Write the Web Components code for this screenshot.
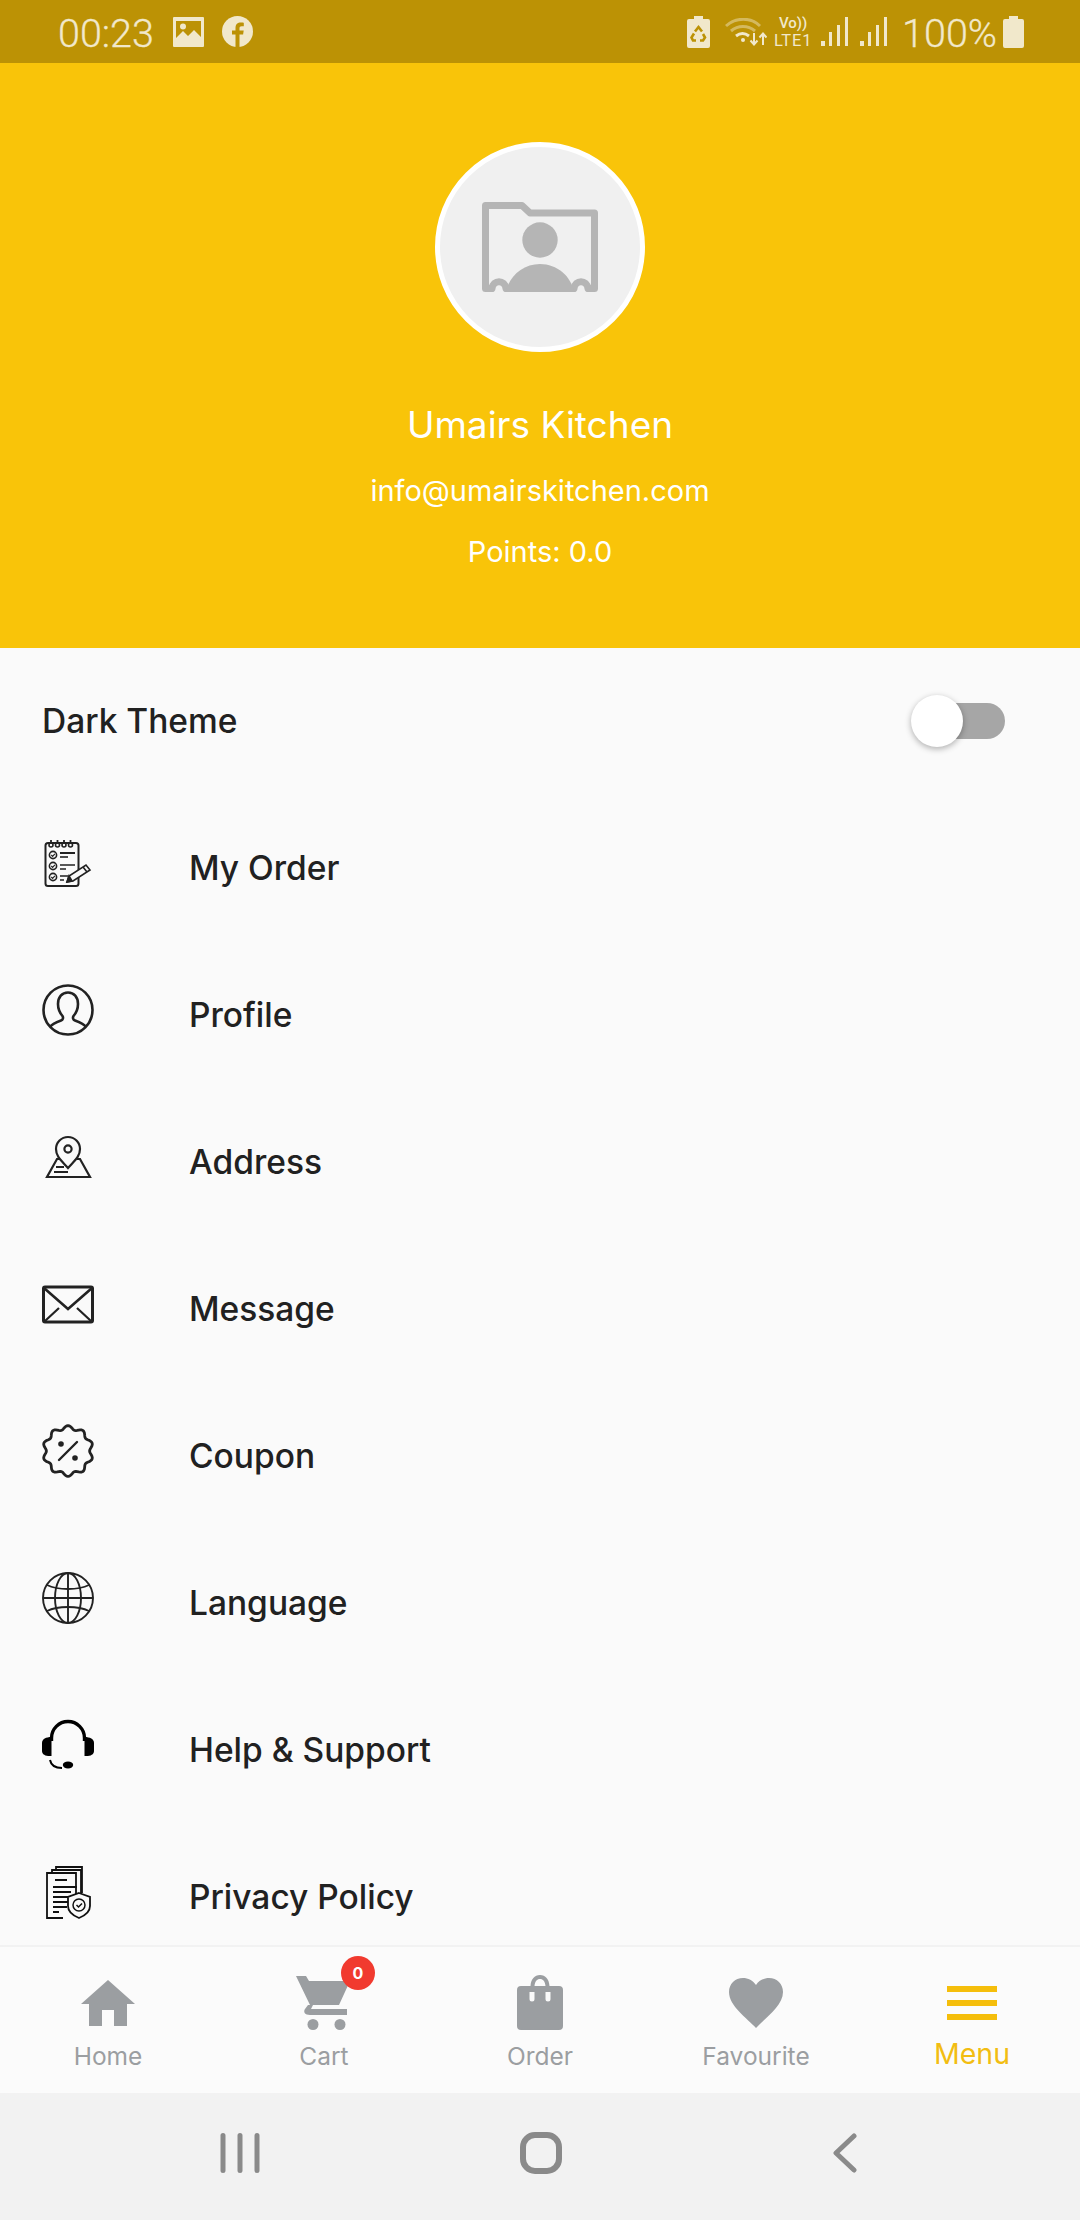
<!DOCTYPE html>
<html>
<head>
<meta charset="utf-8">
<title>Menu</title>
<style>
    html, body { margin: 0; padding: 0; background: #fafafa; }
</style>
</head>
<body>
<app-screen>
    <status-bar slot="status"></status-bar>
    <profile-header slot="header" name="Umairs Kitchen" email="info@umairskitchen.com" points="Points: 0.0"></profile-header>
    <theme-row slot="list">Dark Theme</theme-row>
    <menu-row slot="list" icon="order">My Order</menu-row>
    <menu-row slot="list" icon="profile">Profile</menu-row>
    <menu-row slot="list" icon="address">Address</menu-row>
    <menu-row slot="list" icon="message">Message</menu-row>
    <menu-row slot="list" icon="coupon">Coupon</menu-row>
    <menu-row slot="list" icon="language">Language</menu-row>
    <menu-row slot="list" icon="help">Help &amp; Support</menu-row>
    <menu-row slot="list" icon="privacy">Privacy Policy</menu-row>
    <bottom-nav slot="nav"></bottom-nav>
    <system-nav slot="system"></system-nav>
</app-screen>

<script>
const FONT = `"Inter", "Roboto", "Liberation Sans", sans-serif`;

// scalloped badge outline for the coupon icon
function scallop(cx, cy, r, amp, lobes) {
    let d = '';
    for (let i = 0; i < 120; i++) {
        const a = i / 120 * Math.PI * 2;
        const rr = r + amp * Math.cos(lobes * a);
        const x = cx + rr * Math.sin(a);
        const y = cy - rr * Math.cos(a);
        d += (i ? 'L' : 'M') + x.toFixed(2) + ' ' + y.toFixed(2);
    }
    return d + 'z';
}

const menuIcons = {
    order: `
        <g fill="none" stroke="#222" stroke-width="1.6">
            <rect x="3.5" y="6" width="33" height="43" rx="2.5" stroke-width="2"/>
            <circle cx="9" cy="8" r="2"/><circle cx="15.5" cy="8" r="2"/><circle cx="22" cy="8" r="2"/><circle cx="28.5" cy="8" r="2"/>
            <path d="M9 3v3M15.5 3v3M22 3v3M28.5 3v3" stroke-width="1.8"/>
            <circle cx="11" cy="18" r="3.6"/><circle cx="11" cy="29" r="3.6"/><circle cx="11" cy="40" r="3.6"/>
            <path d="M9.3 18l1.3 1.3 2.3-2.4M9.3 29l1.3 1.3 2.3-2.4M9.3 40l1.3 1.3 2.3-2.4" stroke-width="1.2"/>
            <path d="M18 16h15" stroke-width="2"/><path d="M18 20h8" stroke-width="1.6"/>
            <path d="M18 28h15M18 32h6M18 39h8M18 43h4"/>
            <path d="M25 45l2-6 17-11 4 5-17 11z" fill="#fafafa"/>
            <path d="M25 45l5-1-3-5zM41 30l4 5" fill="#222"/>
        </g>`,
    profile: `
        <g fill="none" stroke="#222" stroke-width="2.6">
            <circle cx="26" cy="26" r="24.5"/>
            <path d="M8 43c2-3 7-5 11-6.500 2-.8 2.500-3 1.500-4.500-3-3.500-4.500-7-4.500-12 0-7 4-11.500 10-11.500s10 4.500 10 11.500c0 5-1.500 8.500-4.500 12-1 1.500-.5 3.700 1.500 4.500 4 1.500 9 3.500 11 6.500"/>
        </g>`,
    address: `
        <g fill="none" stroke="#222" stroke-width="2.2">
            <path d="M26 37c-6-7-12-11-12-19a12 12 0 0 1 24 0c0 8-6 12-12 19z" fill="#fafafa"/>
            <circle cx="26" cy="18" r="3.600"/>
            <path d="M18 28h-3L5 46h43L38 28h-3"/>
            <path d="M14 36h8M12 41h14" stroke-width="1.800"/>
        </g>`,
    message: `
        <g fill="none" stroke="#222" stroke-width="3">
            <rect x="1.500" y="9" width="49" height="35" rx="1.500"/>
            <path d="M2 10l24 21 24-21" stroke-width="2.600"/>
            <path d="M3 43l14-13M49 43L35 30" stroke-width="2.200"/>
        </g>`,
    coupon: `
        <path d="${scallop(26, 26, 23.5, 1.9, 10)}" fill="none" stroke="#222" stroke-width="2.800" stroke-linejoin="round"/>
        <path d="M35 17L17 35" fill="none" stroke="#222" stroke-width="2.400" stroke-linecap="round"/>
        <circle cx="19" cy="19" r="2.800" fill="#222"/>
        <circle cx="33" cy="33" r="2.800" fill="#222"/>`,
    language: `
        <g fill="none" stroke="#222" stroke-width="1.900">
            <circle cx="26" cy="26" r="25"/>
            <ellipse cx="26" cy="26" rx="13" ry="25"/>
            <path d="M26 1v50M1 26h50"/>
            <path d="M5 13c6 3 14 4 21 4s15-1 21-4M5 39c6-3 14-4 21-4s15 1 21 4"/>
        </g>`,
    help: `
        <path d="M9.500 22v-3a16.500 16.500 0 0 1 33 0v3" fill="none" stroke="#000" stroke-width="3.400"/>
        <path d="M9.500 18v19c-5 .5-9.500-1-9.500-5V24c0-4 4-6 9.500-6z" fill="#000"/>
        <path d="M42.500 18v19c5 .5 9.500-1 9.500-5V24c0-4-4-6-9.500-6z" fill="#000"/>
        <path d="M8 41c1 5 5 8 12 8" fill="none" stroke="#000" stroke-width="2"/>
        <ellipse cx="26" cy="46" rx="5.200" ry="3.400" fill="#000"/>`,
    privacy: `
        <g fill="none" stroke="#111" stroke-width="1.800">
            <path d="M14 5V1h26v26"/>
            <path d="M10 8V4h29v27"/>
            <path d="M21 52H5V7h29v28"/>
            <path d="M13 14h12" stroke-width="2"/>
            <path d="M11 21h24M11 26h18M11 31h16M11 36h16M11 41h14M11 46h6" stroke-width="2"/>
        </g>
        <path d="M37 33l11 4v9c0 6-6 10-11 12-5-2-11-6-11-12v-9z" fill="#fafafa" stroke="#111" stroke-width="1.800" transform="translate(0 -6)"/>
        <circle cx="37" cy="39" r="6" fill="none" stroke="#111" stroke-width="1.500"/>
        <path d="M34.500 39l2 2 3.500-3.500" fill="none" stroke="#111" stroke-width="1.500"/>`
};

class AppScreen extends HTMLElement {
    constructor() {
        super();
        this.attachShadow({ mode: 'open' });
        this.shadowRoot.innerHTML = `
            <style>
                :host { display: flex; flex-direction: column; width: 1080px; height: 2220px; overflow: hidden; background: #fafafa; font-family: ${FONT}; }
                .list { flex: 1; min-height: 0; overflow: hidden; display: flex; flex-direction: column; }
            </style>
            <slot name="status"></slot>
            <slot name="header"></slot>
            <div class="list"><slot name="list"></slot></div>
            <slot name="nav"></slot>
            <slot name="system"></slot>
        `;
    }
}

class StatusBar extends HTMLElement {
    constructor() {
        super();
        this.attachShadow({ mode: 'open' });
        this.shadowRoot.innerHTML = `
            <style>
                :host { display: flex; align-items: center; height: 63px; flex: none; background: #bc9205; color: #f1e8cb; font-family: Roboto, sans-serif; padding-left: 58px; padding-right: 56px; }
                .t { font-size: 39.5px; font-weight: 300; line-height: 58px; padding-top: 5px; -webkit-text-stroke: .3px #f1e8cb; }
                svg { display: block; flex: none; }
                .left, .right { display: flex; align-items: center; }
                .right { margin-left: auto; }
                .lte { display: flex; flex-direction: column; align-items: center; width: 40px; margin-left: 6px; margin-right: 8px; padding-top: 1px; }
                .lte span { display: block; line-height: 18.500px; }
                .lte span:first-child { font-size: 15px; font-weight: 500; }
                .lte span:last-child { font-size: 16.500px; letter-spacing: .8px; }
            </style>
            <div class="left">
                <span class="t">00:23</span>
                <svg style="margin-left:19px" width="31" height="30" viewBox="0 0 31 30"><path fill-rule="evenodd" fill="#f1e8cb" d="M1 0h29a1 1 0 0 1 1 1v28a1 1 0 0 1-1 1H1a1 1 0 0 1-1-1V1a1 1 0 0 1 1-1zM3 4v17l7-7 5 5 6-6 7 7V4z"/><circle cx="10" cy="9.500" r="3" fill="#f1e8cb"/></svg>
                <svg style="margin-left:18px" width="31" height="31" viewBox="0 0 31 31"><circle cx="15.500" cy="15.500" r="15.500" fill="#f1e8cb"/><path fill="#bc9205" d="M13.500 31V18.500H10v-4h3.500V12c0-3.800 2.200-5.500 5.300-5.500 1.500 0 2.700.1 3 .2v3.600h-2.100c-1.700 0-2.200.8-2.200 2v2.200h4.200l-.6 4h-3.600V31z"/></svg>
            </div>
            <div class="right">
                <svg width="23" height="32" viewBox="0 0 23 32"><path fill-rule="evenodd" fill="#f1e8cb" d="M7 0h9v3h5a2 2 0 0 1 2 2v25a2 2 0 0 1-2 2H2a2 2 0 0 1-2-2V5a2 2 0 0 1 2-2h5z"/><path fill="none" stroke="#bc9205" stroke-width="2.600" d="M8 15.500l3.500-4.500 3.500 4.500M16 18l2 3.500-2 3h-3M9 24.500H6l-1.500-3 2.500-4"/></svg>
                <svg style="margin-left:15px" width="42" height="28" viewBox="0 0 42 28"><g fill="none" stroke="#f1e8cb"><path stroke-opacity=".45" stroke-width="3" d="M1 8c10-9 25-9 34 0M6 13c7-6 17-6 24 0"/><path stroke-width="3" d="M11 18c4-3 9-3 13 0"/></g><circle cx="18" cy="22" r="2" fill="#f1e8cb"/><path fill="none" stroke="#f1e8cb" stroke-width="2" d="M29 15v11M25.500 22.500l3.500 4 3.500-4M38 27V16M34.500 19.500l3.500-4 3.500 4"/></svg>
                <div class="lte"><span>Vo))</span><span>LTE1</span></div>
                <svg width="27" height="30" viewBox="0 0 27 30"><path fill="#f1e8cb" d="M0 24h4v5H0zM8 15h3v14H8zM16 8h3v21h-3zM24 0h3v29h-3z"/></svg>
                <svg style="margin-left:12px" width="27" height="30" viewBox="0 0 27 30"><path fill="#f1e8cb" d="M0 24h4v5H0zM8 15h3v14H8zM16 8h3v21h-3zM24 0h3v29h-3z"/></svg>
                <span class="t" style="margin-left:15px">100%</span>
                <svg style="margin-left:6px" width="21" height="32" viewBox="0 0 21 32"><path fill="#f1e8cb" d="M6 0h9v3h4a2 2 0 0 1 2 2v25a2 2 0 0 1-2 2H2a2 2 0 0 1-2-2V5a2 2 0 0 1 2-2h4z"/></svg>
            </div>
        `;
    }
}

class ProfileHeader extends HTMLElement {
    constructor() {
        super();
        this.attachShadow({ mode: 'open' });
        this.shadowRoot.innerHTML = `
            <style>
                :host { display: flex; flex-direction: column; align-items: center; flex: none; height: 585px; box-sizing: border-box; padding-top: 79px; background: #f9c409; color: #fff; }
                .avatar { width: 210px; height: 210px; box-sizing: border-box; border: 5px solid #fff; border-radius: 50%; background: #f0f0f0; display: flex; align-items: center; justify-content: center; }
                .name { font-size: 37px; line-height: 44px; margin-top: 51px; }
                .email { font-size: 29px; line-height: 36px; margin-top: 26px; }
                .points { font-size: 29px; line-height: 36px; margin-top: 25px; }
            </style>
            <div class="avatar">
                <svg width="116" height="90" viewBox="0 0 116 90">
                    <path fill="none" stroke="#b5b5b5" stroke-width="7" stroke-linejoin="round" d="M3.500 86.500V3.500H40L48 11H112.500V86.500H106c-1-9-13-9-14 0H24c-1-9-13-9-14 0z"/>
                    <circle cx="58" cy="38" r="17.700" fill="#b5b5b5"/>
                    <path fill="#b5b5b5" d="M24 90c3-16 17-28 34-28s31 12 34 28z"/>
                </svg>
            </div>
            <div class="name">${this.getAttribute('name')}</div>
            <div class="email">${this.getAttribute('email')}</div>
            <div class="points">${this.getAttribute('points')}</div>
        `;
    }
}

class ThemeRow extends HTMLElement {
    constructor() {
        super();
        this.attachShadow({ mode: 'open' });
        this.shadowRoot.innerHTML = `
            <style>
                :host { display: flex; align-items: center; justify-content: space-between; flex: none; height: 147px; box-sizing: border-box; padding: 0 75px 1px 42px; color: #212121; font-size: 33.5px; font-weight: 500; }
                .switch { position: relative; width: 90px; height: 36px; background: #a6a6a6; border-radius: 18px; }
                .knob { position: absolute; left: -4px; top: -8px; width: 52px; height: 52px; border-radius: 50%; background: #fff; box-shadow: 0 2px 6px rgba(0,0,0,.3); }
            </style>
            <span><slot></slot></span>
            <div class="switch"><div class="knob"></div></div>
        `;
    }
}

class MenuRow extends HTMLElement {
    constructor() {
        super();
        this.attachShadow({ mode: 'open' });
        const icon = menuIcons[this.getAttribute('icon')] || '';
        this.shadowRoot.innerHTML = `
            <style>
                :host { display: flex; align-items: center; flex: none; height: 147px; box-sizing: border-box; padding: 0 42px 1px; color: #212121; font-size: 33.5px; font-weight: 500; }
                svg { display: block; flex: none; width: 52px; height: 52px; margin-right: 95px; margin-top: -10px; overflow: visible; }
            </style>
            <svg viewBox="0 0 52 52">${icon}</svg>
            <span><slot></slot></span>
        `;
    }
}

const navItems = [
    { label: 'Home', svg: `<svg width="54" height="46" viewBox="0 0 54 46"><path fill="#9b9ea1" d="M27 0l27 24h-8v22H33V30H21v16H8V24H0z"/></svg>` },
    { label: 'Cart', svg: `<svg style="margin-left:-2px" width="54" height="54" viewBox="0 0 54 54"><path fill="#9b9ea1" d="M0 0h10l3 5h41L43 29H14zM12 29h5l-2 4h36v6H14c-5 0-7-3-5-6z"/><circle cx="17" cy="48.500" r="5.500" fill="#9b9ea1"/><circle cx="44" cy="48.500" r="5.500" fill="#9b9ea1"/></svg>`, badge: '0' },
    { label: 'Order', svg: `<svg width="46" height="55" viewBox="0 0 46 55"><path fill="#9b9ea1" d="M4 11h9.500c.5-7 4-11 9.500-11s9 4 9.500 11H42a4 4 0 0 1 4 4v36a4 4 0 0 1-4 4H4a4 4 0 0 1-4-4V15a4 4 0 0 1 4-4zm13.500 0h11c-.4-4.500-2.500-7-5.500-7s-5.100 2.500-5.500 7z"/><path fill="#fafafa" d="M12.500 17h5v7a2.500 2.500 0 0 1-5 0zM28.500 17h5v7a2.500 2.500 0 0 1-5 0z"/></svg>` },
    { label: 'Favourite', svg: `<svg width="54" height="50" viewBox="0 0 54 50"><path fill="#9b9ea1" d="M27 50C18 40 0 28 0 14 0 6 6 0 14 0c5 0 10 2.500 13 7 3-4.500 8-7 13-7 8 0 14 6 14 14 0 14-18 26-27 36z"/></svg>` },
    { label: 'Menu', active: true, svg: `<svg width="50" height="34" viewBox="0 0 50 34"><path fill="#f5be0b" d="M0 0h50v6H0zM0 14h50v6H0zM0 28h50v6H0z"/></svg>` }
];

class BottomNav extends HTMLElement {
    constructor() {
        super();
        this.attachShadow({ mode: 'open' });
        const items = navItems.map(item => `
            <div class="item ${item.active ? 'active' : ''}">
                <div class="icon">${item.svg}${item.badge ? `<span class="badge">${item.badge}</span>` : ''}</div>
                <div class="label">${item.label}</div>
            </div>
        `).join('');
        this.shadowRoot.innerHTML = `
            <style>
                :host { display: grid; grid-template-columns: repeat(5, 216px); flex: none; height: 148px; box-sizing: border-box; border-top: 2px solid #f2f2f2; background: #fbfbfb; }
                .item { display: flex; flex-direction: column; align-items: center; color: #9b9ea1; }
                .icon { position: relative; height: 55px; margin-top: 28px; display: flex; align-items: center; justify-content: center; }
                .label { font-size: 24.5px; line-height: 30px; margin-top: 11px; }
                .active { color: #f2bd12; }
                .active .label { font-size: 28.5px; margin-top: 9px; }
                .badge { position: absolute; left: 43px; top: -19px; width: 34px; height: 34px; border-radius: 50%; background: #f13a2f; color: #fff; font-size: 16px; font-weight: 700; line-height: 34px; text-align: center; }
            </style>
            ${items}
        `;
    }
}

class SystemNav extends HTMLElement {
    constructor() {
        super();
        this.attachShadow({ mode: 'open' });
        this.shadowRoot.innerHTML = `
            <style>
                :host { display: flex; align-items: center; flex: none; height: 127px; box-sizing: border-box; padding: 0 0 8px 220px; background: #f2f2f2; }
                svg { display: block; flex: none; }
            </style>
            <svg width="40" height="40" viewBox="0 0 40 40"><path stroke="#8a8a8a" stroke-width="5" stroke-linecap="round" d="M3 2.500v35M20 2.500v35M37 2.500v35"/></svg>
            <svg style="margin-left:260px" width="42" height="42" viewBox="0 0 42 42"><rect x="3" y="3" width="36" height="36" rx="12" fill="none" stroke="#8a8a8a" stroke-width="6"/></svg>
            <svg style="margin-left:271px" width="24" height="40" viewBox="0 0 24 40"><path fill="none" stroke="#8a8a8a" stroke-width="5" stroke-linecap="round" stroke-linejoin="round" d="M21 3L3 20l18 17"/></svg>
        `;
    }
}

customElements.define('app-screen', AppScreen);
customElements.define('status-bar', StatusBar);
customElements.define('profile-header', ProfileHeader);
customElements.define('theme-row', ThemeRow);
customElements.define('menu-row', MenuRow);
customElements.define('bottom-nav', BottomNav);
customElements.define('system-nav', SystemNav);
</script>
</body>
</html>
